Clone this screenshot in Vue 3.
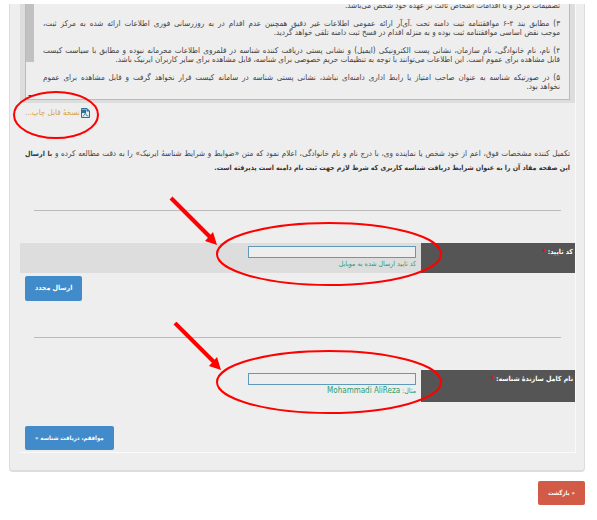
<template>
  <div class="page" dir="rtl" lang="fa">
    <div class="panel">
      <form class="form" @submit.prevent>
        <div class="terms-wrap">
          <div class="terms">
            <div class="terms-text">
              <p v-for="(lines, i) in terms" :key="i">
                <span v-for="line in lines" :key="line">{{ line }}</span>
              </p>
            </div>
            <div class="scrollbar">
              <div class="thumb"></div>
              <span class="scroll-down"></span>
            </div>
          </div>
        </div>

        <div class="print">
          <a class="print-link" href="#">
            <svg class="print-icon" viewBox="0 0 9 10">
              <path d="M.5 .5h5.500l2.500 2.500v6.500h-8z" fill="#e4eef4" stroke="#2f6f96" />
              <path d="M5.500 0l3.500 3.500h-3.500z" fill="#2f6f96" />
              <path d="M0 1.500h5v3.500h-5z" fill="#2f6f96" />
              <path d="M2 8.500l2.500-3.500 1 2.500 2 .5" fill="none" stroke="#2f6f96" stroke-width=".8" />
            </svg>
            نسخهٔ قابل چاپ...
          </a>
          <svg class="mark mark-print" viewBox="0 0 88 50">
            <ellipse cx="44" cy="25" rx="42" ry="23" />
          </svg>
        </div>

        <p class="consent">
          <span>
            تکمیل کننده مشخصات فوق، اعم از خود شخص یا نماینده وی، با درج نام و نام خانوادگی، اعلام نمود که متن
            «ضوابط و شرایط شناسهٔ ایرنیک» را به دقت مطالعه کرده و <b>با ارسال</b>
          </span>
          <b class="consent-rest">این صفحه مفاد آن را به عنوان شرایط دریافت شناسه کاربری که شرط لازم جهت ثبت نام دامنه است پذیرفته است.</b>
        </p>

        <hr class="line" />

        <div class="row row-code">
          <label class="label" for="code">کد تایید:<span class="star">*</span></label>
          <div class="field">
            <input id="code" v-model="code" type="text" />
            <div class="hint">کد تایید ارسال شده به موبایل</div>
            <svg class="mark mark-field" viewBox="0 0 275 96">
              <ellipse cx="161" cy="59" rx="112" ry="31" />
              <path class="shaft" d="M3 3L43 43" />
              <path class="head" d="M49 50L37 46L45 37Z" />
            </svg>
          </div>
        </div>
        <div class="actions">
          <button class="btn btn-resend" type="button">ارسال مجدد</button>
        </div>

        <hr class="line" />

        <div class="row row-name">
          <label class="label" for="fullname">نام کامل سازندهٔ شناسه:<span class="star">*</span></label>
          <div class="field">
            <input id="fullname" v-model="fullName" type="text" />
            <div class="hint">مثال: <bdi>Mohammadi AliReza</bdi></div>
            <svg class="mark mark-field" viewBox="0 0 275 96">
              <ellipse cx="161" cy="60" rx="112" ry="31" />
              <path class="shaft" d="M7 1L47 41" />
              <path class="head" d="M53 48L41 44L49 35Z" />
            </svg>
          </div>
        </div>
        <div class="actions">
          <button class="btn" type="submit">موافقم، دریافت شناسه »</button>
        </div>
      </form>
    </div>
    <button class="btn btn-back" type="button">« بازگشت</button>
  </div>
</template>

<script setup>
import { ref } from 'vue'

const code = ref('')
const fullName = ref('')

const terms = [
  ['تصمیمات مرکز و یا اقدامات اشخاص ثالث بر عهده خود شخص می‌باشد.'],
  [
    '۳) مطابق بند ۴-۶ موافقتنامه ثبت دامنه تحت .آی‌آر ارائه عمومی اطلاعات غیر دقیق همچنین عدم اقدام در به روزرسانی فوری اطلاعات ارائه شده به مرکز ثبت،',
    'موجب نقض اساسی موافقتنامه ثبت بوده و به منزله اقدام در فسخ ثبت دامنه تلقی خواهد گردید.'
  ],
  [
    '۴) نام، نام خانوادگی، نام سازمان، نشانی پست الکترونیکی (ایمیل) و نشانی پستی دریافت کننده شناسه در قلمروی اطلاعات محرمانه نبوده و مطابق با سیاست کیست',
    'قابل مشاهده برای عموم است. این اطلاعات می‌توانند با توجه به تنظیمات حریم خصوصی برای شناسه، قابل مشاهده برای سایر کاربران ایرنیک باشد.'
  ],
  [
    '۵) در صورتیکه شناسه به عنوان صاحب امتیاز یا رابط اداری دامنه‌ای نباشد، نشانی پستی شناسه در سامانه کیست قرار نخواهد گرفت و قابل مشاهده برای عموم',
    'نخواهد بود.'
  ]
]
</script>

<style>
body {
  background: #fff;
}
</style>

<style scoped>
.page {
  padding: 4px 12px 16px 9px;
  font-family: 'DejaVu Sans Condensed', 'DejaVu Sans', sans-serif;
  font-size: 8px;
  color: #444;
}

.panel {
  padding: 0 8px 17px 10px;
  border: 1px solid #ddd;
  border-top: 0;
  border-bottom-width: 2px;
  border-radius: 0 0 4px 4px;
  background: #eee;
}

.form {
  border-right: 1px solid #fafafa;
  border-bottom: 1px solid #fafafa;
}

.terms-wrap {
  padding: 0 5px 3px;
  background: #ddd;
}

.terms {
  display: flex;
  height: 95px;
  border: 1px solid #bbb;
  border-top: 0;
  background: #eee;
}

.terms-text {
  flex: 1;
  display: flex;
  flex-direction: column;
  justify-content: flex-end;
  gap: 9px;
  overflow: hidden;
  padding: 0 9px 8px;
}

.terms-text p {
  flex-shrink: 0;
  margin: 0;
  line-height: 9px;
}

.terms-text span {
  display: block;
}

.terms-text span:not(:last-child) {
  text-align: justify;
  text-align-last: justify;
}

.scrollbar {
  display: flex;
  flex-direction: column;
  justify-content: space-between;
  align-items: center;
  width: 8px;
}

.thumb {
  width: 8px;
  height: 58px;
  background: #c1c1c1;
}

.scroll-down {
  border: 2px solid transparent;
  border-top-color: #444;
}

.print {
  position: relative;
  display: flex;
  justify-content: flex-end;
  padding: 4px 5px 6px;
}

.print-link {
  display: flex;
  align-items: center;
  gap: 1px;
  line-height: 12px;
  color: #d9a441;
  text-decoration: none;
}

.print-icon {
  width: 9px;
  height: 10px;
}

.mark {
  position: absolute;
  pointer-events: none;
  z-index: 1;
  fill: none;
  stroke: #f00;
  stroke-width: 2;
}

.mark-print {
  left: -8px;
  top: -13px;
  width: 88px;
  height: 50px;
}

.mark-field {
  right: -22px;
  top: -48px;
  width: 275px;
  height: 96px;
}

.shaft {
  stroke-width: 4;
}

.head {
  fill: #f00;
  stroke: none;
}

.consent {
  margin: 21px 5px 34px;
  line-height: 15px;
}

.consent span {
  display: block;
  text-align: justify;
  text-align-last: justify;
}

.consent b {
  font-size: 7px;
  line-height: 12px;
  color: #333;
}

.consent .consent-rest {
  display: block;
  line-height: 15px;
}

.line {
  height: 1px;
  margin: 0 14px 32px;
  border: 0;
  background: #bbb;
}

.row {
  display: grid;
  grid-template-columns: 154px 1fr;
}

.row-code {
  min-height: 30px;
  background: #ddd;
}

.row-name {
  min-height: 32px;
}

.label {
  padding: 4px 2px;
  line-height: 10px;
  background: #555;
  color: #fff;
  font-size: 7px;
  font-weight: bold;
}

.star {
  margin-right: 2px;
  color: #f00;
}

.field {
  position: relative;
  padding: 3px 5px;
}

.field input {
  display: block;
  box-sizing: border-box;
  width: 168px;
  height: 12px;
  padding: 0 2px;
  border: 1px solid #5f9ab8;
  background: #eee;
  font: inherit;
}

.hint {
  font-size: 7px;
  line-height: 12px;
  color: #2a9d6e;
}

.hint bdi {
  font-size: 8px;
}

.actions {
  display: flex;
  justify-content: flex-end;
  padding: 3px 5px;
}

.row-code + .actions {
  padding-bottom: 36px;
}

.row-name + .actions {
  padding: 24px 5px 2px;
}

.btn {
  padding: 6px 10px;
  border: 0;
  border-radius: 2px;
  background: #428bca;
  color: #fff;
  font-family: inherit;
  font-size: 6px;
  font-weight: bold;
  line-height: 12px;
  cursor: pointer;
}

.btn-resend {
  font-size: 7px;
  line-height: 13px;
}

.btn-back {
  display: block;
  margin-top: 9px;
  background: #d15b47;
}
</style>
